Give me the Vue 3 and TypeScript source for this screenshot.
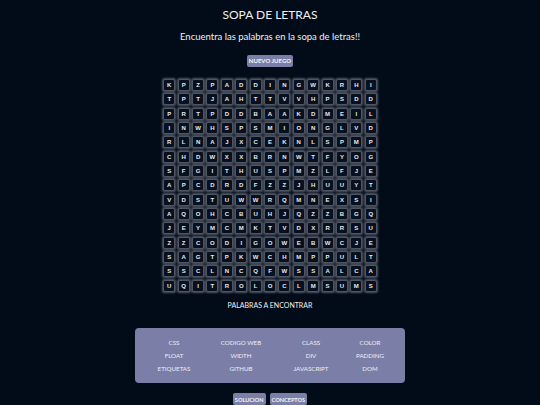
<script setup lang="ts">
const rows: string[] = [
  'KPZPADDINGWKRHI',
  'TPTJAHTTVVHPSDD',
  'PRTPDDBAAKDMEIL',
  'INWHSPSMIONGLVD',
  'RLNAJXCEKNLSPMP',
  'CHDWXXBRNWTFYOG',
  'SFGITHUSPMZLFJE',
  'APCDRDFZZJHUUYT',
  'VDSTUWWRQMNEXSI',
  'AQOHCBUHJQZZBGQ',
  'JEYMCMKTVDXRRSU',
  'ZZCODIGOWEBWCJE',
  'SAGTPKWCHMPPULT',
  'SSCLNCQFWSSALCA',
  'UQITROLOCLMSUMS',
]
const cells = rows.join('').split('')
const words: string[] = [
  'CSS', 'CODIGO WEB', 'CLASS', 'COLOR',
  'FLOAT', 'WIDTH', 'DIV', 'PADDING',
  'ETIQUETAS', 'GITHUB', 'JAVASCRIPT', 'DOM',
]
</script>

<template>
  <main class="page">
    <h1 class="title">SOPA DE LETRAS</h1>
    <p class="subtitle">Encuentra las palabras en la sopa de letras!!</p>
    <button class="btn new-game">NUEVO JUEGO</button>
    <div class="grid">
      <div v-for="(c, i) in cells" :key="i" class="cell">{{ c }}</div>
    </div>
    <h2 class="find">PALABRAS A ENCONTRAR</h2>
    <section class="words">
      <span v-for="w in words" :key="w" class="word">{{ w }}</span>
    </section>
    <div class="actions">
      <button class="btn small">SOLUCION</button>
      <button class="btn small">CONCEPTOS</button>
    </div>
  </main>
</template>

<style>
html, body {
  margin: 0;
  background: #020b18;
}
</style>

<style scoped>
.page {
  width: 540px;
  height: 405px;
  overflow: hidden;
  background: #020b18;
  color: #f0f0f5;
  font-family: "Lato", "Noto Sans", sans-serif;
  display: flex;
  flex-direction: column;
  align-items: center;
}
.title {
  margin: 8px 0 0;
  font-size: 12px;
  line-height: 14px;
  font-weight: 400;
}
.subtitle {
  margin: 8px 0 0;
  font-size: 9.5px;
  line-height: 13px;
}
.btn {
  border: none;
  border-radius: 2px;
  background: #7b7fa8;
  color: #f4f4fa;
  font-family: inherit;
  font-size: 6px;
  font-weight: 700;
  line-height: 11px;
  height: 12px;
  padding: 0 2px;
}
.btn.small {
  font-size: 5.6px;
}
.new-game {
  margin-top: 12px;
}
.grid {
  margin-top: 12px;
  display: grid;
  grid-template-columns: repeat(15, 12px);
  grid-auto-rows: 12px;
  gap: 2.35px 2.4px;
}
.cell {
  box-sizing: border-box;
  border: 1px solid #4f5561;
  border-radius: 2px;
  box-shadow: 0 0 2px 0.6px #4f5561;
  background: #07101e;
  color: #e8e8ee;
  font-family: "Liberation Sans", sans-serif;
  font-size: 6px;
  font-weight: 700;
  display: flex;
  align-items: center;
  justify-content: center;
}
.find {
  margin: 8px 0 0;
  font-size: 7px;
  line-height: 10px;
  font-weight: 400;
}
.words {
  margin-top: 18px;
  box-sizing: border-box;
  width: 270px;
  height: 56px;
  padding: 8px 7px 8px 11px;
  border-radius: 4px;
  background: #7b7fa8;
  display: grid;
  grid-template-columns: 56px 78px 62px 56px;
  grid-auto-rows: 13px;
  align-items: center;
  justify-items: center;
}
.word {
  font-size: 6.2px;
  line-height: 13px;
  color: #eeeef6;
}
.actions {
  margin-top: 10px;
  display: flex;
  gap: 4px;
}
</style>
